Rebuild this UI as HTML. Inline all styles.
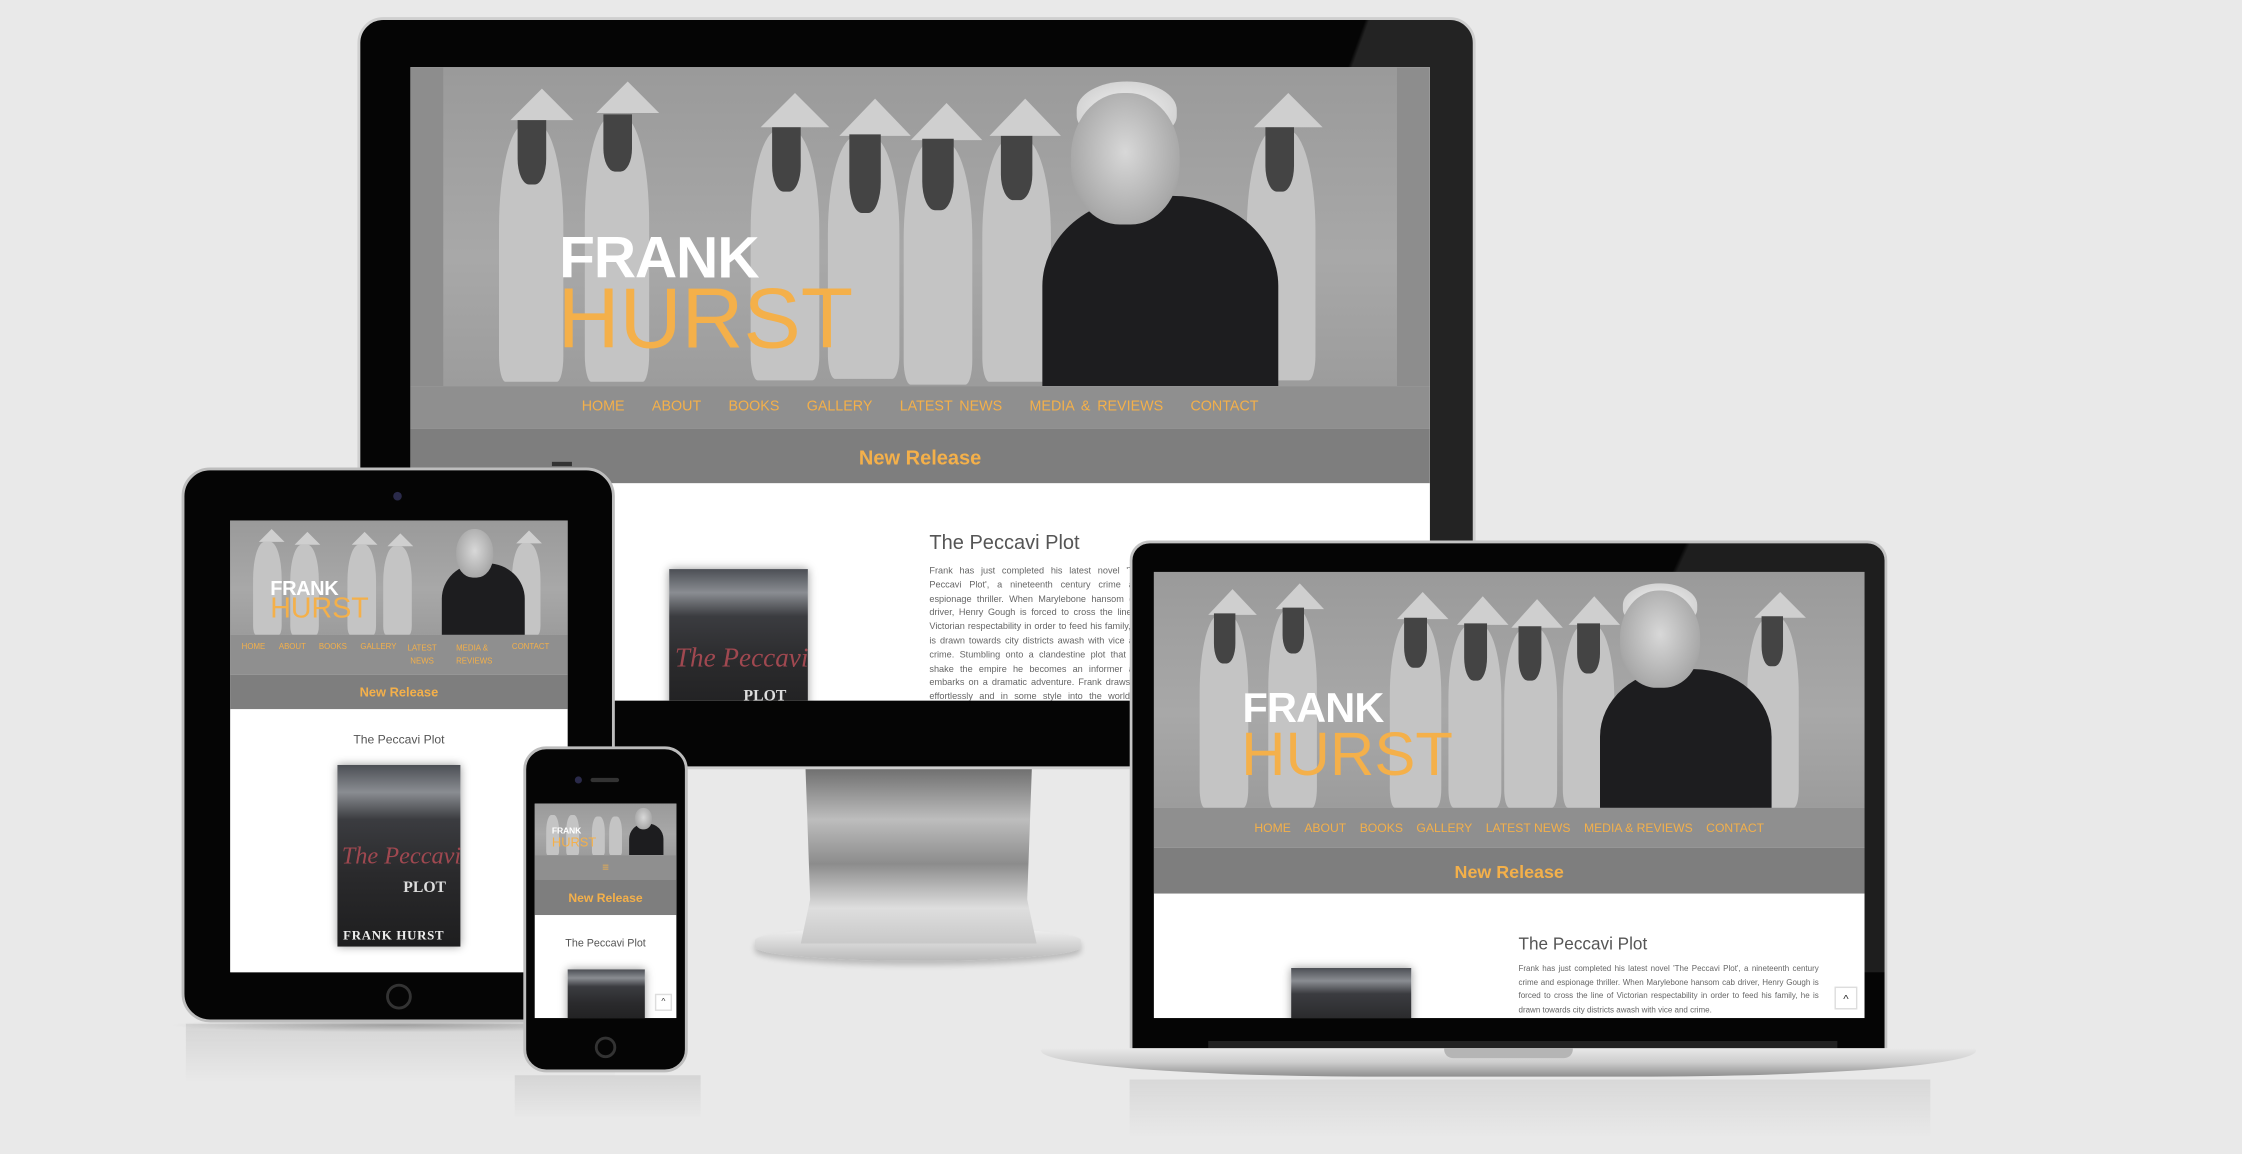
<!DOCTYPE html>
<html><head><meta charset="utf-8"><style>
*{margin:0;padding:0;box-sizing:border-box}
html,body{width:2242px;height:1154px;overflow:hidden;background:#e9e9e9;font-family:"Liberation Sans",sans-serif}
#s{position:absolute;left:0;top:0;width:1568px;height:807px;transform:scale(1.42985);transform-origin:0 0}
.a{position:absolute}
.hero{position:absolute;background:#8d8d8d;overflow:hidden}
.hero .in{position:absolute;background:linear-gradient(180deg,#9a9a9a,#a8a8a8 60%,#9c9c9c)}
.fig{position:absolute;background:#c4c4c4;border-radius:40% 40% 10% 10%}
.hat{position:absolute;width:0;height:0;border-left:solid transparent;border-right:solid transparent;border-bottom:solid #cfcfcf}
.hair{position:absolute;background:#444;border-radius:0 0 40% 40%}
.sw{position:absolute;background:#1d1d1f;border-radius:45% 45% 0 0}
.face{position:absolute;background:radial-gradient(ellipse at 50% 45%,#d8d8d8,#a9a9a9 70%,#8a8a8a);border-radius:48% 48% 45% 45%}
.wh{position:absolute;background:radial-gradient(ellipse,#f2f2f2,#c8c8c8);border-radius:50% 50% 40% 40%}
.fr{position:absolute;color:#fff;font-weight:bold;white-space:nowrap;line-height:1;letter-spacing:-.02em}
.hu{position:absolute;color:#f4b04a;white-space:nowrap;line-height:1}
.nav{position:absolute;background:#8f8f8f;color:#f4b04a;text-align:center;white-space:nowrap}
.band{position:absolute;background:#7e7e7e;color:#f4b04a;text-align:center;font-weight:bold;white-space:nowrap}
.wht{position:absolute;background:#fff;overflow:hidden}
.book{position:absolute;background:linear-gradient(180deg,#4c4f55 0%,#8a8d92 15%,#3b3c40 30%,#2a2a2c 60%,#1e1e1f 100%);box-shadow:0 0 6px rgba(0,0,0,.4);overflow:hidden}
.book .pc{position:absolute;color:#a04850;font-family:"Liberation Serif",serif;white-space:nowrap}
.ttl{position:absolute;color:#555;white-space:nowrap}
.p{position:absolute;color:#666;text-align:justify;overflow:hidden}
</style></head><body><div id="s">

<!-- reflections -->
<div class="a" style="left:130px;top:716px;width:300px;height:40px;background:linear-gradient(180deg,rgba(200,200,200,.6),transparent)"></div>
<div class="a" style="left:360px;top:752px;width:130px;height:30px;background:linear-gradient(180deg,rgba(200,200,200,.6),transparent)"></div>
<div class="a" style="left:790px;top:755px;width:560px;height:40px;background:linear-gradient(180deg,rgba(205,205,205,.6),transparent)"></div>

<!-- MONITOR -->
<div class="a" style="left:528px;top:648px;width:228px;height:24px;border-radius:50%/40%;background:linear-gradient(180deg,#f4f4f4,#b9b9b9);box-shadow:0 3px 4px rgba(0,0,0,.2)"></div>
<div class="a" style="left:560px;top:536px;width:165px;height:124px;background:linear-gradient(180deg,#6c6c6c 0%,#bdbdbd 30%,#8c8c8c 55%,#dedede 80%,#c8c8c8 100%);clip-path:polygon(2% 0,98% 0,96% 75%,100% 100%,0 100%,4% 75%)"></div>
<div class="a" style="left:250px;top:12px;width:782px;height:526px;background:#050505;border-radius:18px;border:2px solid #cfcfcf"></div>
<div class="a" style="left:860px;top:14px;width:170px;height:400px;background:linear-gradient(110deg,transparent 30%,rgba(255,255,255,.12) 31%);border-radius:0 16px 0 0"></div>
<div class="a" style="left:287px;top:47px;width:713px;height:443px;overflow:hidden;background:#fff">
 <div class="hero" style="left:0;top:0;width:713px;height:223px">
  <div class="in" style="left:23px;top:0;width:667px;height:223px"></div>
  <div class="hat" style="left:70px;top:15px;border-width:0 22px 22px"></div><div class="fig" style="left:62px;top:40px;width:45px;height:180px"></div><div class="hair" style="left:75px;top:37px;width:20px;height:45px"></div>
  <div class="hat" style="left:130px;top:10px;border-width:0 22px 22px"></div><div class="fig" style="left:122px;top:35px;width:45px;height:185px"></div><div class="hair" style="left:135px;top:33px;width:20px;height:40px"></div>
  <div class="hat" style="left:245px;top:18px;border-width:0 24px 24px"></div><div class="fig" style="left:238px;top:44px;width:48px;height:175px"></div><div class="hair" style="left:253px;top:42px;width:20px;height:45px"></div>
  <div class="hat" style="left:300px;top:22px;border-width:0 25px 26px"></div><div class="fig" style="left:292px;top:48px;width:50px;height:170px"></div><div class="hair" style="left:307px;top:47px;width:22px;height:55px"></div>
  <div class="hat" style="left:350px;top:25px;border-width:0 25px 26px"></div><div class="fig" style="left:345px;top:52px;width:48px;height:170px"></div><div class="hair" style="left:358px;top:50px;width:22px;height:50px"></div>
  <div class="hat" style="left:405px;top:22px;border-width:0 25px 26px"></div><div class="fig" style="left:400px;top:50px;width:48px;height:170px"></div><div class="hair" style="left:413px;top:48px;width:22px;height:45px"></div>
  <div class="hat" style="left:590px;top:18px;border-width:0 24px 24px"></div><div class="fig" style="left:585px;top:44px;width:48px;height:175px"></div><div class="hair" style="left:598px;top:42px;width:20px;height:45px"></div>
  <div class="sw" style="left:442px;top:90px;width:165px;height:140px"></div>
  <div class="wh" style="left:466px;top:10px;width:70px;height:40px"></div>
  <div class="face" style="left:462px;top:18px;width:76px;height:92px"></div>
  <div class="fr" style="left:104px;top:113px;font-size:41px">FRANK</div>
  <div class="hu" style="left:103px;top:146px;font-size:60px">HURST</div>
 </div>
 <div class="nav" style="left:0;top:223px;width:713px;height:30px;font-size:10px;line-height:30px;word-spacing:2px">HOME&nbsp;&nbsp;&nbsp;&nbsp;ABOUT&nbsp;&nbsp;&nbsp;&nbsp;BOOKS&nbsp;&nbsp;&nbsp;&nbsp;GALLERY&nbsp;&nbsp;&nbsp;&nbsp;LATEST NEWS&nbsp;&nbsp;&nbsp;&nbsp;MEDIA &amp; REVIEWS&nbsp;&nbsp;&nbsp;&nbsp;CONTACT</div>
 <div class="band" style="left:0;top:253px;width:713px;height:38px;font-size:14px;line-height:40px">New Release</div>
 <div class="wht" style="left:0;top:291px;width:713px;height:152px">
  <div class="ttl" style="left:363px;top:33px;font-size:14px">The Peccavi Plot</div>
  <div class="p" style="left:363px;top:57px;width:150px;font-size:6.4px;line-height:9.8px">Frank has just completed his latest novel 'The Peccavi Plot', a nineteenth century crime and espionage thriller. When Marylebone hansom cab driver, Henry Gough is forced to cross the line of Victorian respectability in order to feed his family, he is drawn towards city districts awash with vice and crime. Stumbling onto a clandestine plot that will shake the empire he becomes an informer and embarks on a dramatic adventure. Frank draws us effortlessly and in some style into the world of London's East End and to the grand estates where sinister forces seek to challenge British imperial ambitions.</div>
  <div class="book" style="left:181px;top:60px;width:97px;height:110px"><div class="pc" style="left:4px;top:52px;font-size:19px;font-style:italic">The Peccavi</div><div class="pc" style="left:52px;top:83px;font-size:11px;color:#ddd;font-weight:bold">PLOT</div></div>
 </div>
</div>
<div class="a" style="left:386px;top:323px;width:14px;height:3px;background:#333"></div>

<!-- TABLET -->
<div class="a" style="left:118px;top:712px;width:320px;height:10px;background:radial-gradient(ellipse,rgba(0,0,0,.25),transparent 70%)"></div>
<div class="a" style="left:127px;top:327px;width:303px;height:388px;background:#050505;border-radius:20px;border:2px solid #bdbdbd"></div>
<div class="a" style="left:275px;top:344px;width:6px;height:6px;border-radius:50%;background:#2a2a4a"></div>
<div class="a" style="left:270px;top:688px;width:18px;height:18px;border-radius:50%;border:2px solid #333"></div>
<div class="a" style="left:161px;top:364px;width:236px;height:316px;overflow:hidden;background:#fff">
 <div class="hero" style="left:0;top:0;width:236px;height:80px">
  <div class="in" style="left:0;top:0;width:236px;height:80px"></div>
  <div class="hat" style="left:20px;top:6px;border-width:0 9px 9px"></div><div class="fig" style="left:16px;top:15px;width:20px;height:65px"></div>
  <div class="hat" style="left:45px;top:8px;border-width:0 9px 9px"></div><div class="fig" style="left:42px;top:17px;width:20px;height:63px"></div>
  <div class="hat" style="left:85px;top:8px;border-width:0 9px 9px"></div><div class="fig" style="left:82px;top:17px;width:20px;height:63px"></div>
  <div class="hat" style="left:110px;top:9px;border-width:0 9px 9px"></div><div class="fig" style="left:107px;top:18px;width:20px;height:62px"></div>
  <div class="hat" style="left:200px;top:7px;border-width:0 9px 9px"></div><div class="fig" style="left:197px;top:16px;width:20px;height:64px"></div>
  <div class="sw" style="left:148px;top:30px;width:58px;height:55px"></div>
  <div class="face" style="left:158px;top:6px;width:26px;height:34px"></div>
  <div class="fr" style="left:28px;top:40px;font-size:14px">FRANK</div>
  <div class="hu" style="left:28px;top:52px;font-size:20px">HURST</div>
 </div>
 <div class="nav" style="left:0;top:80px;width:236px;height:28px;font-size:5.5px">
  <span class="a" style="left:8px;top:6px">HOME</span><span class="a" style="left:34px;top:6px">ABOUT</span><span class="a" style="left:62px;top:6px">BOOKS</span><span class="a" style="left:91px;top:6px">GALLERY</span><span class="a" style="left:124px;top:6px;line-height:9px">LATEST<br>NEWS</span><span class="a" style="left:158px;top:6px;line-height:9px;text-align:left">MEDIA &amp;<br>REVIEWS</span><span class="a" style="left:197px;top:6px">CONTACT</span>
 </div>
 <div class="band" style="left:0;top:108px;width:236px;height:24px;font-size:9px;line-height:25px">New Release</div>
 <div class="wht" style="left:0;top:132px;width:236px;height:184px">
  <div class="ttl" style="left:0;width:236px;text-align:center;top:16px;font-size:8.5px">The Peccavi Plot</div>
  <div class="book" style="left:75px;top:39px;width:86px;height:127px"><div class="pc" style="left:3px;top:54px;font-size:17px;font-style:italic">The Peccavi</div><div class="pc" style="left:46px;top:80px;font-size:11px;color:#ddd;font-weight:bold">PLOT</div><div class="pc" style="left:4px;top:114px;font-size:9px;color:#eee;font-weight:bold;letter-spacing:.5px">FRANK HURST</div></div>
 </div>
</div>

<!-- PHONE -->
<div class="a" style="left:366px;top:522px;width:115px;height:228px;background:#050505;border-radius:16px;border:2px solid #bdbdbd"></div>
<div class="a" style="left:402px;top:543px;width:5px;height:5px;border-radius:50%;background:#2a2a4a"></div>
<div class="a" style="left:413px;top:544px;width:20px;height:3px;border-radius:2px;background:#333"></div>
<div class="a" style="left:416px;top:725px;width:15px;height:15px;border-radius:50%;border:2px solid #333"></div>
<div class="a" style="left:374px;top:562px;width:99px;height:150px;overflow:hidden;background:#fff">
 <div class="hero" style="left:0;top:0;width:99px;height:36px">
  <div class="in" style="left:0;top:0;width:99px;height:36px"></div>
  <div class="fig" style="left:8px;top:8px;width:9px;height:28px"></div><div class="fig" style="left:22px;top:8px;width:9px;height:28px"></div><div class="fig" style="left:40px;top:9px;width:9px;height:27px"></div><div class="fig" style="left:52px;top:9px;width:9px;height:27px"></div>
  <div class="sw" style="left:66px;top:14px;width:24px;height:24px"></div>
  <div class="face" style="left:70px;top:3px;width:12px;height:15px"></div>
  <div class="fr" style="left:12px;top:17px;font-size:6px">FRANK</div>
  <div class="hu" style="left:12px;top:23px;font-size:9px">HURST</div>
 </div>
 <div class="nav" style="left:0;top:36px;width:99px;height:17px;font-size:8px;line-height:17px">≡</div>
 <div class="band" style="left:0;top:53px;width:99px;height:25px;font-size:8.5px;line-height:26px">New Release</div>
 <div class="wht" style="left:0;top:78px;width:99px;height:72px">
  <div class="ttl" style="left:0;width:99px;text-align:center;top:15px;font-size:7.5px">The Peccavi Plot</div>
  <div class="book" style="left:23px;top:38px;width:54px;height:40px"></div>
  <div class="a" style="left:84px;top:55px;width:12px;height:12px;background:#fff;border:1px solid #ddd;font-size:6px;text-align:center;line-height:10px;color:#333">^</div>
 </div>
</div>

<!-- LAPTOP -->
<div class="a" style="left:790px;top:378px;width:530px;height:360px;background:#050505;border-radius:14px 14px 0 0;border:2px solid #c4c4c4;border-bottom:none"></div>
<div class="a" style="left:1100px;top:380px;width:218px;height:300px;background:linear-gradient(115deg,transparent 22%,rgba(255,255,255,.1) 23%);border-radius:0 12px 0 0"></div>
<div class="a" style="left:845px;top:728px;width:440px;height:5px;background:#222"></div>
<div class="a" style="left:728px;top:733px;width:654px;height:20px;background:linear-gradient(180deg,#e9e9e9,#cdcdcd 50%,#8e8e8e);border-radius:2px 2px 40% 40%/2px 2px 100% 100%"></div>
<div class="a" style="left:1010px;top:733px;width:90px;height:7px;background:#b5b5b5;border-radius:0 0 6px 6px"></div>
<div class="a" style="left:807px;top:400px;width:497px;height:312px;overflow:hidden;background:#fff">
 <div class="hero" style="left:0;top:0;width:497px;height:165px">
  <div class="in" style="left:0;top:0;width:497px;height:165px"></div>
  <div class="hat" style="left:38px;top:12px;border-width:0 17px 18px"></div><div class="fig" style="left:32px;top:30px;width:34px;height:135px"></div><div class="hair" style="left:42px;top:29px;width:15px;height:35px"></div>
  <div class="hat" style="left:85px;top:8px;border-width:0 17px 18px"></div><div class="fig" style="left:80px;top:26px;width:34px;height:139px"></div><div class="hair" style="left:90px;top:25px;width:15px;height:32px"></div>
  <div class="hat" style="left:170px;top:14px;border-width:0 18px 19px"></div><div class="fig" style="left:165px;top:33px;width:36px;height:132px"></div><div class="hair" style="left:175px;top:32px;width:16px;height:35px"></div>
  <div class="hat" style="left:212px;top:17px;border-width:0 18px 20px"></div><div class="fig" style="left:206px;top:37px;width:37px;height:128px"></div><div class="hair" style="left:217px;top:36px;width:16px;height:40px"></div>
  <div class="hat" style="left:250px;top:19px;border-width:0 18px 20px"></div><div class="fig" style="left:245px;top:39px;width:37px;height:126px"></div><div class="hair" style="left:255px;top:38px;width:16px;height:38px"></div>
  <div class="hat" style="left:290px;top:17px;border-width:0 18px 20px"></div><div class="fig" style="left:286px;top:37px;width:36px;height:128px"></div><div class="hair" style="left:296px;top:36px;width:16px;height:35px"></div>
  <div class="hat" style="left:420px;top:14px;border-width:0 18px 18px"></div><div class="fig" style="left:415px;top:32px;width:36px;height:133px"></div><div class="hair" style="left:425px;top:31px;width:15px;height:35px"></div>
  <div class="sw" style="left:312px;top:68px;width:120px;height:105px"></div>
  <div class="wh" style="left:328px;top:8px;width:52px;height:30px"></div>
  <div class="face" style="left:326px;top:13px;width:56px;height:68px"></div>
  <div class="fr" style="left:62px;top:82px;font-size:29px">FRANK</div>
  <div class="hu" style="left:61px;top:107px;font-size:43px">HURST</div>
 </div>
 <div class="nav" style="left:0;top:165px;width:497px;height:28px;font-size:8.5px;line-height:28px">HOME&nbsp;&nbsp;&nbsp;&nbsp;ABOUT&nbsp;&nbsp;&nbsp;&nbsp;BOOKS&nbsp;&nbsp;&nbsp;&nbsp;GALLERY&nbsp;&nbsp;&nbsp;&nbsp;LATEST NEWS&nbsp;&nbsp;&nbsp;&nbsp;MEDIA &amp; REVIEWS&nbsp;&nbsp;&nbsp;&nbsp;CONTACT</div>
 <div class="band" style="left:0;top:193px;width:497px;height:32px;font-size:12.5px;line-height:34px">New Release</div>
 <div class="wht" style="left:0;top:225px;width:497px;height:87px">
  <div class="ttl" style="left:255px;top:28px;font-size:12px">The Peccavi Plot</div>
  <div class="p" style="left:255px;top:49px;width:210px;font-size:5.6px;line-height:9.6px">Frank has just completed his latest novel 'The Peccavi Plot', a nineteenth century crime and espionage thriller. When Marylebone hansom cab driver, Henry Gough is forced to cross the line of Victorian respectability in order to feed his family, he is drawn towards city districts awash with vice and crime.</div>
  <div class="book" style="left:96px;top:52px;width:84px;height:60px"></div>
  <div class="a" style="left:476px;top:65px;width:16px;height:16px;background:#fff;border:1px solid #ddd;font-size:8px;text-align:center;line-height:15px;color:#333">^</div>
 </div>
</div>

</div></body></html>
